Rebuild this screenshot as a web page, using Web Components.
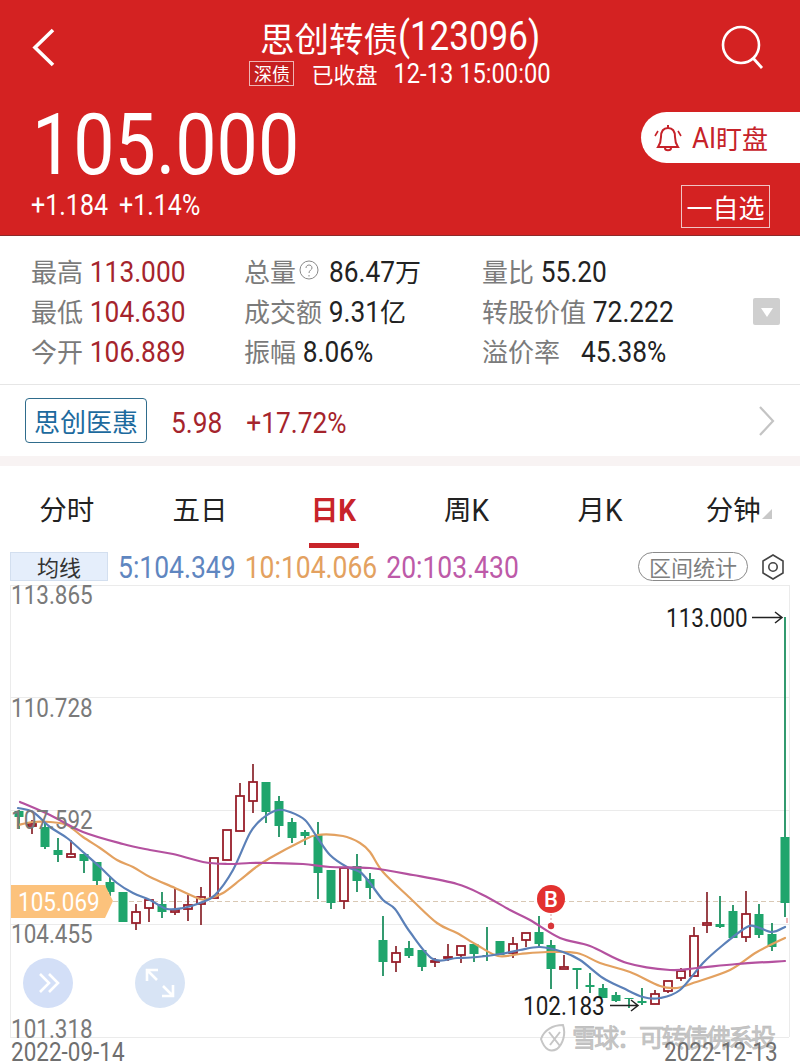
<!DOCTYPE html>
<html lang="zh"><head><meta charset="utf-8"><title>思创转债</title>
<style>
html,body{margin:0;padding:0;background:#fff;overflow:hidden}
body{font-family:"Noto Sans CJK SC","Roboto",sans-serif;width:800px;height:1064px}
</style></head><body>
<stock-app></stock-app>
<script>
const CJK='"Noto Sans CJK SC","Noto Sans",sans-serif';
const NUM='Roboto,"Noto Sans CJK SC",sans-serif';
class El extends HTMLElement{
  constructor(){super();this.attachShadow({mode:'open'}).innerHTML=this.render();}
}
customElements.define('num-text',class extends El{render(){return `<style>:host{display:inline-block;font-family:${NUM};transform:translateY(var(--dy,2px)) scaleY(1.15);transform-origin:50% 55%;line-height:1;white-space:pre}</style><slot></slot>`}});

customElements.define('stock-header',class extends El{render(){return `<style>
:host{display:block;background:#d42222;color:#fff;height:235px;border-bottom:1px solid #8c2a2a;font-family:${CJK}}
.nav{display:grid;grid-template-columns:100px 1fr 100px;height:100px}
.back{padding:28px 0 0 30px}.search{padding:24px 0 0 20px}
.mid{display:flex;flex-direction:column;align-items:center;padding-top:14px}
.title{display:flex;align-items:center;height:46px;font-size:34.5px;line-height:46px;white-space:nowrap;--dy:0px}
.title num-text{font-size:35px}
.sub{display:flex;align-items:center;height:26px;font-size:22px;white-space:nowrap}
.badge{display:block;width:45px;height:25px;box-sizing:border-box;border:1px solid #eeb4b4;background:#c51f1f;font-size:18px;line-height:23px;text-align:center;margin-right:17px}
.sub num-text{font-size:23.7px;margin-left:16px}
.row{display:flex;justify-content:space-between}
.left{padding-left:32px}
.price{height:88px;display:flex;align-items:center;--dy:3px}
.price num-text{font-size:73.5px}
.chg{display:flex;gap:11px;margin:-3px 0 0 -1px;height:36px;align-items:center;font-size:25px}
.right{display:flex;flex-direction:column;align-items:flex-end;padding-top:12px}
.ai{display:flex;align-items:center;width:159px;height:51px;box-sizing:border-box;background:#fff;color:#c62229;border-radius:26px 0 0 26px;padding-left:13px;font-size:26px;line-height:1}
.ai svg{margin-right:10px}.ai num-text{font-size:26px;--dy:0px}
.fav{display:block;width:89px;height:43px;box-sizing:border-box;border:1px solid #f0c4c4;margin:22px 30px 0 0;font-size:26px;line-height:41px;text-align:center;white-space:nowrap}
</style>
<div class="nav">
 <div class="back"><svg width="26" height="40" viewBox="0 0 26 40"><polyline points="23,2 5,19.5 23,37" fill="none" stroke="#fff" stroke-width="3.6"/></svg></div>
 <div class="mid"><div class="title"><span>思创转债</span><num-text>(123096)</num-text></div>
 <div class="sub"><span class="badge">深债</span><span>已收盘</span><num-text>12-13 15:00:00</num-text></div></div>
 <div class="search"><svg width="48" height="48" viewBox="0 0 48 48"><circle cx="21" cy="21" r="18" fill="none" stroke="#fff" stroke-width="2.6"/><line x1="33" y1="34" x2="42" y2="44" stroke="#fff" stroke-width="2.8"/></svg></div>
</div>
<div class="row"><div class="left"><div class="price"><num-text>105.000</num-text></div>
 <div class="chg"><num-text>+1.184</num-text><num-text>+1.14%</num-text></div></div>
 <div class="right"><div class="ai"><svg width="28" height="32" viewBox="0 0 28 32" fill="none" stroke="#c62229" stroke-width="2"><path d="M14 3v3M14 6c-5 0-7 4-7 9 0 5-1 7-3 10h20c-2-3-3-5-3-10 0-5-2-9-7-9z"/><path d="M11 26c0 3 6 3 6 0"/><path d="M4 9 1 14M24 9l3 5" stroke-width="1.6"/></svg><num-text>AI</num-text><span>盯盘</span></div>
 <div class="fav">一自选</div></div></div>`}});

customElements.define('quote-item',class extends El{render(){return `<style>
:host{display:flex;align-items:center;height:40px;font-size:26px;color:#7b7b7b;white-space:nowrap;font-family:${CJK}}
::slotted(num-text){font-size:26.3px;color:#222;margin-left:1px}
::slotted(num-text.r){color:#a5242c}
::slotted(svg){margin:0 9px 0 3px}
</style><slot></slot>`}});

customElements.define('quote-panel',class extends El{render(){return `<style>
:host{display:grid;grid-template-columns:214px 238px 1fr;height:149px;box-sizing:border-box;padding:14px 20px 0 31px;border-bottom:1px solid #e6e6e6;position:relative;background:#fff}
.drop{position:absolute;left:753px;top:62px;width:27px;height:27px;background:#cfcfcf;border-radius:2px;display:flex;align-items:center;justify-content:center}
</style><slot></slot><div class="drop"><svg width="14" height="12" viewBox="0 0 14 12"><polygon points="1,2 13,2 7,11" fill="#fff"/></svg></div>`}});

customElements.define('related-row',class extends El{render(){return `<style>
:host{display:flex;align-items:center;height:71px;box-sizing:border-box;padding:0 24px 0 25px;font-family:${CJK};background:#fff;--dy:3px}
.tag{display:block;width:122px;height:45px;box-sizing:border-box;border:1px solid #2f6c8c;border-radius:4px;color:#1c6a9e;font-size:26px;line-height:43px;text-align:center;margin-right:24px}
num-text{font-size:26.3px;color:#a5242c}
.g{margin-left:24px}.sp{flex:1}
</style><span class="tag">思创医惠</span><num-text>5.98</num-text><num-text class="g">+17.72%</num-text><div class="sp"></div>
<svg width="18" height="30" viewBox="0 0 18 30"><polyline points="2,1 15,15 2,29" fill="none" stroke="#c4c4c4" stroke-width="2.2"/></svg>`}});

customElements.define('period-tabs',class extends El{render(){return `<style>
:host{display:grid;grid-template-columns:repeat(6,1fr);height:96px;box-sizing:border-box;border-top:10px solid #f8f3f3;font-family:${CJK};background:#fff;--dy:0px}
.t{display:flex;justify-content:center;align-items:baseline;padding-top:24px;font-size:27.5px;line-height:36px;color:#222;position:relative;white-space:nowrap}
.t num-text{font-size:28px}
.a{color:#c8242a;font-weight:700}
.a::after{content:"";position:absolute;left:42px;top:77px;width:50px;height:5px;background:#c8242a}
.tri{position:absolute;left:95px;top:43px;width:0;height:0;border-left:10px solid transparent;border-bottom:10px solid #c8c8c8}
</style>
<div class="t">分时</div><div class="t">五日</div><div class="t a">日<num-text>K</num-text></div><div class="t">周<num-text>K</num-text></div><div class="t">月<num-text>K</num-text></div><div class="t">分钟<span class="tri"></span></div>`}});

customElements.define('ma-legend',class extends El{render(){return `<style>
:host{display:flex;align-items:center;height:29px;padding:0 16px 0 10px;font-family:${CJK};background:#fff}
.b{display:block;width:98px;height:29px;box-sizing:border-box;background:#e5eefb;border:1px solid #d3dfef;color:#333;font-size:22px;line-height:27px;text-align:center;margin-right:10px}
num-text{font-size:26.5px;margin-right:9px}
.sp{flex:1}
.p{display:block;width:110px;height:29px;box-sizing:border-box;border:1px solid #8a8a8a;border-radius:15px;color:#7f7f7f;font-size:22px;line-height:27px;text-align:center;margin-right:14px}
</style><span class="b">均线</span><num-text style="color:#5f86c0">5:104.349</num-text><num-text style="color:#e3a160">10:104.066</num-text><num-text style="color:#bd5aa8">20:103.430</num-text><div class="sp"></div><span class="p">区间统计</span>
<svg width="22" height="26" viewBox="0 0 22 26" fill="none" stroke="#444" stroke-width="1.6"><polygon points="11,1 21,7 21,19 11,25 1,19 1,7"/><circle cx="11" cy="13" r="4.2"/></svg>`}});

const C=[[19,'g',811,817,810,829],[32,'r',824,826,820,834],[45,'g',827,847,823,849],[58,'g',850,855,838,862],[71,'r',854,857,840,858],[84,'g',854,861,854,873],[97,'g',862,881,862,885],[110,'g',882,892,876,896],[123,'g',892,922,892,922],[136,'r',912,923,904,930],[149,'r',900,908,900,922],[162,'g',904,912,892,918],[175,'r',910,912,888,915],[188,'r',905,909,895,921],[201,'r',897,904,887,925],[214,'r',858,898,858,898],[227,'r',830,860,830,860],[240,'r',796,831,783,831],[253,'r',782,801,764,813],[266,'g',782,812,782,823],[279,'g',801,826,796,837],[292,'g',822,838,818,843],[305,'g',832,836,830,845],[318,'g',835,873,822,899],[331,'g',870,903,870,909],[344,'r',868,901,868,909],[357,'g',866,881,854,892],[370,'g',879,888,873,899],[383,'g',940,962,916,976],[396,'r',953,962,946,972],[409,'g',948,956,941,958],[422,'g',950,967,950,971],[435,'r',961,962,958,967],[448,'r',957,958,944,961],[461,'r',946,955,946,963],[474,'g',944,954,944,962],[487,'g',955,956,927,961],[500,'g',941,955,941,955],[513,'r',944,953,937,958],[526,'r',933,940,933,947],[539,'g',932,944,916,947],[551,'g',945,969,940,989],[564,'r',967,969,955,969],[577,'g',968,970,968,989],[590,'g',985,987,973,993],[603,'g',988,998,984,998],[616,'g',995,1001,992,1002],[629,'g',998,999,998,1008],[642,'g',1001,1003,988,1005],[655,'r',994,1004,990,1004],[668,'r',981,991,981,993],[681,'r',971,978,968,981],[694,'r',936,976,927,976],[707,'r',923,925,892,933],[720,'g',924,927,896,928],[733,'g',911,938,905,938],[746,'r',914,937,891,942],[759,'g',914,935,904,938],[772,'g',934,947,923,951],[785,'g',837,903,617,917]];
const MA5=[[18,808],[33,812],[50,827],[67,838],[83,852],[100,867],[117,883],[133,893],[150,900],[167,909],[183,908],[200,903],[215,895],[233,870],[250,833],[263,818],[278,810],[290,812],[305,820],[317,837],[330,855],[347,867],[360,872],[370,883],[383,900],[395,909],[410,932],[433,959],[457,958],[477,957],[500,954],[520,950],[540,947],[563,952],[580,960],[603,978],[623,988],[643,997],[660,998],[680,990],[703,963],[723,945],[747,927],[757,927],[772,932],[785,927]];
const MA10=[[18,825],[33,822],[50,822],[67,825],[83,837],[100,848],[117,860],[133,867],[150,877],[175,888],[200,899],[210,898],[223,893],[240,880],[255,868],[270,858],[300,842],[317,835],[343,836],[360,843],[370,852],[383,872],[410,898],[437,923],[457,933],[477,945],[498,956],[520,954],[547,952],[577,953],[600,963],[630,972],[660,986],[677,988],[693,983],[730,970],[757,952],[785,938]];
const MA20=[[20,802],[50,815],[83,832],[123,844],[150,850],[173,854],[203,862],[227,864],[250,863],[270,863],[303,864],[330,867],[370,868],[413,875],[457,884],[483,895],[510,910],[530,920],[560,938],[590,946],[627,963],[670,970],[697,968],[737,964],[785,961]];
const O=585;
const smooth=q=>{const p=q.map(([x,y])=>[x,y-O]);let d=`M${p[0][0]} ${p[0][1]}`;for(let i=0;i<p.length-1;i++){const a=p[i-1]||p[i],b=p[i],c=p[i+1],e=p[i+2]||c;d+=`C${(b[0]+(c[0]-a[0])/6).toFixed(1)} ${(b[1]+(c[1]-a[1])/6).toFixed(1)} ${(c[0]-(e[0]-b[0])/6).toFixed(1)} ${(c[1]-(e[1]-b[1])/6).toFixed(1)} ${c[0]} ${c[1]}`}return d};
const lab=(x,y,s,fill='#7a7a7a',size=22.5)=>`<text transform="translate(${x} ${y-O}) scale(1 1.12)" font-size="${size}" fill="${fill}">${s}</text>`;
customElements.define('kline-chart',class extends El{render(){
 const candles=C.map(([x,k,t,b,h,l])=>{
  const col=k=='g'?'#1fa56c':'#981f2b',wick=k=='g'?'#1d8f60':'#8e2f36';
  let s=`<line x1="${x}" x2="${x}" y1="${h-O}" y2="${l-O}" stroke="${wick}" stroke-width="1.8"/>`;
  s+=k=='g'?`<rect x="${x-4.5}" y="${t-O}" width="9" height="${b-t}" fill="${col}"/>`:`<rect x="${x-4}" y="${t-O}" width="8" height="${Math.max(b-t,1)}" fill="#fff" stroke="${col}" stroke-width="1.8"/>`;
  return s}).join('');
 const grid=[585,697,810,924,1037].map(y=>`<line x1="10" x2="789" y1="${y-O+.5}" y2="${y-O+.5}" stroke="#ebebeb"/>`).join('');
 return `<style>:host{display:block;height:479px;margin-top:4px;position:relative}svg{display:block;font-family:${NUM}}</style>
<svg width="800" height="479" viewBox="0 0 800 479">
${grid}
<line x1="10.5" x2="10.5" y1="0" y2="452" stroke="#ebebeb"/><line x1="789.5" x2="789.5" y1="0" y2="452" stroke="#ebebeb"/>
<line x1="113" x2="789" y1="316.5" y2="316.5" stroke="#d9c8b4" stroke-dasharray="5 3"/>
${candles}
<g fill="none" stroke-width="2.2" stroke-linejoin="round" stroke-linecap="round">
<path d="${smooth(MA10)}" stroke="#e3a160"/><path d="${smooth(MA5)}" stroke="#5b80b8"/><path d="${smooth(MA20)}" stroke="#b4519f"/></g>
${lab(11,604,'113.865')}${lab(11,717,'110.728')}${lab(11,829,'107.592')}${lab(11,943,'104.455')}${lab(11,1038,'101.318')}
${lab(11,1061,'2022-09-14','#6f6f6f')}
<polygon points="11,300 105,300 113,316 105,333 11,333" fill="#fcc27c"/>
${lab(18,911,'105.069','#fff')}
<circle cx="48" cy="398" r="25" fill="#d3dff7"/>
<g fill="none" stroke="#fff" stroke-width="2.6"><polyline points="40,389 49,398 40,407"/><polyline points="49,389 58,398 49,407"/></g>
<circle cx="160" cy="398" r="25" fill="#d8e4f5"/>
<g fill="none" stroke="#fff" stroke-width="2.6"><path d="M148 386l9 9M147 396v-11h11"/><path d="M163 401l10 10M173 400v11h-11"/></g>
<text x="572" y="462" font-family="${CJK}" font-size="25" fill="#bdbdbd" stroke="#b4b4b4" stroke-width=".8" opacity=".85" textLength="204">雪球：可转债佛系投</text>
<g fill="none" stroke="#c6c6c6" stroke-width="2"><path d="M541 454c3-9 12-14 22-14 3 9 0 19-6 24-6 3-12 2-16-10z"/><path d="M549 447l11 14M560 447l-10 13"/></g>
${lab(664,1061,'2022-12-13','#6f6f6f')}
<circle cx="551" cy="314" r="14" fill="#e3312f"/>
<text x="551" y="322" text-anchor="middle" font-size="22" font-weight="500" fill="#fff">B</text>
<line x1="551" x2="551" y1="329" y2="338" stroke="#d9a0a0" stroke-dasharray="2 2"/><circle cx="551" cy="341" r="3.2" fill="#d8363a"/>
<rect x="786" y="333" width="2" height="5" fill="#f0b8b8"/>
${lab(666,627,'113.000','#1c1c1c')}
<g fill="none" stroke="#222" stroke-width="1.5"><path d="M752 32.5h30M775 27l7 5.5-7 5.5"/><path d="M610 420.5h28M631 415l7 5.5-7 5.5"/></g>
${lab(523,1015,'102.183','#1c1c1c')}
</svg>`}});

customElements.define('stock-app',class extends El{render(){return `<style>:host{display:flex;flex-direction:column;width:800px;height:1064px;overflow:hidden;background:#fff}</style>
<stock-header></stock-header>
<quote-panel>
 <div style="display:flex;flex-direction:column"><quote-item>最高&nbsp;<num-text class="r">113.000</num-text></quote-item><quote-item>最低&nbsp;<num-text class="r">104.630</num-text></quote-item><quote-item>今开&nbsp;<num-text class="r">106.889</num-text></quote-item></div>
 <div style="display:flex;flex-direction:column;margin-left:-1px"><quote-item>总量<svg width="20" height="20" viewBox="0 0 20 20" fill="none" stroke="#8a8a8a"><circle cx="10" cy="10" r="9"/><path d="M7 8c0-4 6-4 6 0 0 2-3 2-3 5M10 15v1.5"/></svg><num-text>86.47</num-text><span style="color:#222">万</span></quote-item><quote-item>成交额&nbsp;<num-text>9.31</num-text><span style="color:#222">亿</span></quote-item><quote-item>振幅&nbsp;<num-text>8.06%</num-text></quote-item></div>
 <div style="display:flex;flex-direction:column;margin-left:-1px"><quote-item>量比&nbsp;<num-text>55.20</num-text></quote-item><quote-item>转股价值&nbsp;<num-text>72.222</num-text></quote-item><quote-item>溢价率<num-text style="margin-left:21px">45.38%</num-text></quote-item></div>
</quote-panel>
<related-row></related-row>
<period-tabs></period-tabs>
<ma-legend></ma-legend>
<kline-chart></kline-chart>`}});
</script>
</body></html>
